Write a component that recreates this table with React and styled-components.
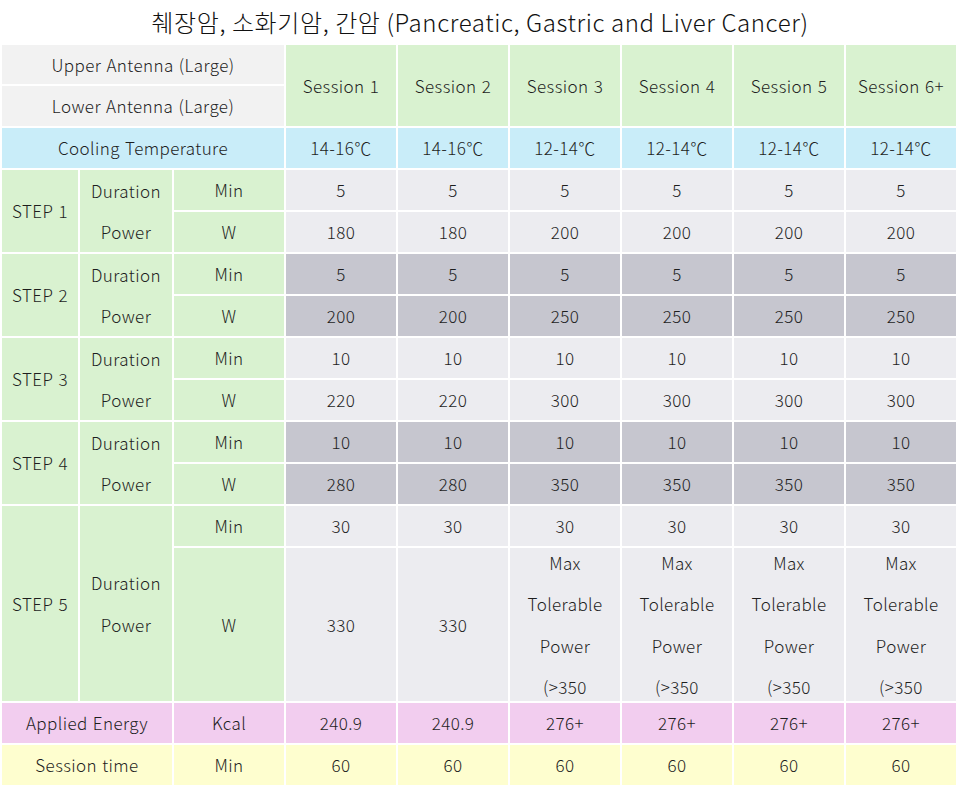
import React from 'react';
import styled, { createGlobalStyle } from 'styled-components';

const tones = {
  gray: '#f2f2f2',
  green: '#d9f2d0',
  blue: '#c9edf9',
  light: '#ececf0',
  dark: '#c6c6cf',
  pink: '#f2cdef',
  yellow: '#fefecf',
};

const GlobalStyle = createGlobalStyle`
  body {
    margin: 0;
    background: #ffffff;
    font-family: "Noto Sans CJK KR", "Noto Sans", sans-serif;
    color: #1e1e1e;
  }
`;

const Page = styled.div`
  width: 960px;
`;

const Title = styled.h1`
  margin: 0;
  height: 43px;
  line-height: 43px;
  text-align: center;
  font-size: 24px;
  font-weight: 300;
  letter-spacing: 0.6px;
  color: #111111;
`;

const Grid = styled.div`
  display: grid;
  grid-template-columns: 76px 92px repeat(7, 110px);
  grid-template-rows: 39px repeat(11, 40px) 153px 40px 40px;
  gap: 2px;
  padding: 2px;
  background: #ffffff;
`;

const Cell = styled.div`
  display: flex;
  align-items: center;
  justify-content: center;
  overflow: hidden;
  text-align: center;
  font-size: 17px;
  font-weight: 300;
  letter-spacing: 0.4px;
  word-spacing: 1px;
  line-height: 41.5px;
  background: ${(props) => tones[props.tone]};
  grid-column: span ${(props) => props.cols || 1};
  grid-row: span ${(props) => props.rows || 1};
`;

// one word per line, as in the merged label cells
const WordStack = styled.span`
  width: min-content;
`;

const sessions = ['Session 1', 'Session 2', 'Session 3', 'Session 4', 'Session 5', 'Session 6+'];
const cooling = ['14-16℃', '14-16℃', '12-14℃', '12-14℃', '12-14℃', '12-14℃'];

const steps = [
  { min: ['5', '5', '5', '5', '5', '5'], w: ['180', '180', '200', '200', '200', '200'] },
  { min: ['5', '5', '5', '5', '5', '5'], w: ['200', '200', '250', '250', '250', '250'] },
  { min: ['10', '10', '10', '10', '10', '10'], w: ['220', '220', '300', '300', '300', '300'] },
  { min: ['10', '10', '10', '10', '10', '10'], w: ['280', '280', '350', '350', '350', '350'] },
];

const maxPower = <WordStack>Max Tolerable Power (&gt;350</WordStack>;
const step5W = ['330', '330', maxPower, maxPower, maxPower, maxPower];
const energy = ['240.9', '240.9', '276+', '276+', '276+', '276+'];

const Values = ({ list, tone }) =>
  list.map((v, i) => (
    <Cell key={i} tone={tone}>
      {v}
    </Cell>
  ));

const StepRows = ({ label, min, w, tone }) => (
  <>
    <Cell tone="green" rows={2}>{label}</Cell>
    <Cell tone="green" rows={2}>
      <WordStack>Duration Power</WordStack>
    </Cell>
    <Cell tone="green">Min</Cell>
    <Values list={min} tone={tone} />
    <Cell tone="green">W</Cell>
    <Values list={w} tone={tone} />
  </>
);

const App = () => (
  <Page>
    <GlobalStyle />
    <Title>췌장암, 소화기암, 간암 (Pancreatic, Gastric and Liver Cancer)</Title>
    <Grid>
      <Cell tone="gray" cols={3}>Upper Antenna (Large)</Cell>
      {sessions.map((s) => (
        <Cell key={s} tone="green" rows={2}>{s}</Cell>
      ))}
      <Cell tone="gray" cols={3}>Lower Antenna (Large)</Cell>

      <Cell tone="blue" cols={3}>Cooling Temperature</Cell>
      <Values list={cooling} tone="blue" />

      {steps.map((s, i) => (
        <StepRows
          key={i}
          label={`STEP ${i + 1}`}
          min={s.min}
          w={s.w}
          tone={i % 2 === 0 ? 'light' : 'dark'}
        />
      ))}
      <StepRows label="STEP 5" min={['30', '30', '30', '30', '30', '30']} w={step5W} tone="light" />

      <Cell tone="pink" cols={2}>Applied Energy</Cell>
      <Cell tone="pink">Kcal</Cell>
      <Values list={energy} tone="pink" />

      <Cell tone="yellow" cols={2}>Session time</Cell>
      <Cell tone="yellow">Min</Cell>
      <Values list={['60', '60', '60', '60', '60', '60']} tone="yellow" />
    </Grid>
  </Page>
);

export default App;
